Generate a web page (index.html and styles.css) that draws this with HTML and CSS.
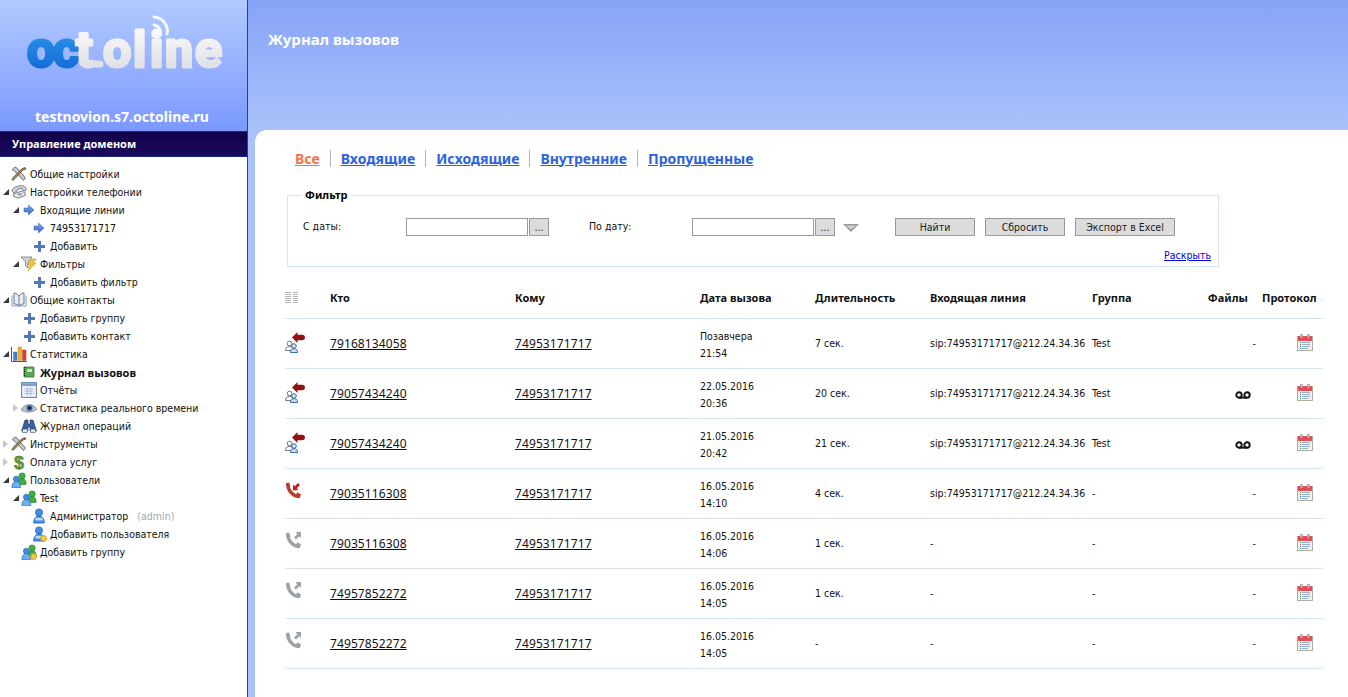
FILE: index.html
```html
<!DOCTYPE html>
<html lang="ru">
<head>
<meta charset="utf-8">
<title>Журнал вызовов</title>
<link rel="stylesheet" href="styles.css">
</head>
<body>
<svg class="defs" width="0" height="0">
  <defs>
    <linearGradient id="lg-blue" x1="0" y1="0" x2="0" y2="1"><stop offset="0" stop-color="#2f9df2"/><stop offset="1" stop-color="#0f62d2"/></linearGradient>
    <linearGradient id="lg-gray" x1="0" y1="0" x2="0" y2="1"><stop offset="0" stop-color="#ffffff"/><stop offset="1" stop-color="#d8d9dd"/></linearGradient>
    <linearGradient id="lg-arrow" x1="0" y1="0" x2="0" y2="1"><stop offset="0" stop-color="#86aef0"/><stop offset="1" stop-color="#2f62c4"/></linearGradient>
    <symbol id="i-tools" viewBox="0 0 16 16"><path d="M1 3.500L4 1l2 1 8.500 10-2 2.500L3.500 5z" fill="#c6cad0" stroke="#5a5a5a" stroke-width=".8"/><path d="M14 1.500l1 1.500-3 1-8 8.500-2 2-1-1 1.500-2.500L10.500 3z" fill="#a08a60" stroke="#57492f" stroke-width=".8"/></symbol>
    <symbol id="i-phone" viewBox="0 0 18 18"><path d="M1 8c0-3 5-6 10-6s6 2 6 4l-1 2-3-1-1-2-5 1v2l-4 2z" fill="#c9d2de" stroke="#5d6673" stroke-width=".9"/><path d="M3 11l9-3 4 2v3l-8 3-5-2z" fill="#e3e7ec" stroke="#5d6673" stroke-width=".9"/><ellipse cx="10" cy="11.500" rx="2.600" ry="1.500" fill="#95a1b1"/></symbol>
    <symbol id="i-arrow" viewBox="0 0 12 12"><path d="M1 4h4.500V1L11 6l-5.500 5V8H1z" fill="url(#lg-arrow)" stroke="#2f5fb0" stroke-width=".5"/></symbol>
    <symbol id="i-plus" viewBox="0 0 11 11"><path d="M4 0h3v4h4v3H7v4H4V7H0V4h4z" fill="#5379bd"/></symbol>
    <symbol id="i-filter" viewBox="0 0 16 16"><path d="M0 1h11L7 6v6L4.500 10V6z" fill="#d3d7dd" stroke="#666" stroke-width=".7"/><path d="M10 3h5l-3 4h3l-8 8 2.500-6H7z" fill="#f3c82f" stroke="#a98814" stroke-width=".5"/></symbol>
    <symbol id="i-book" viewBox="0 0 16 16"><path d="M8 4C6.500 2 4.500 1 3 1v11c2 0 4 .5 5 2.500 1-2 3-2.500 5-2.500V1c-1.500 0-3.500 1-5 3z" fill="#e6edf7" stroke="#51638a" stroke-width=".9"/><path d="M8 4v10" stroke="#51638a" stroke-width=".8"/><path d="M1 3.500V14h6M15 3.500V14H9" fill="none" stroke="#7d8eb0" stroke-width=".9"/></symbol>
    <symbol id="i-chart" viewBox="0 0 16 16"><path d="M.5 1v14.500H16" fill="none" stroke="#556" stroke-width="1"/><rect x="2.500" y="6" width="3.500" height="8.500" fill="#4a7fd8" stroke="#2f5fb0" stroke-width=".4"/><rect x="7" y="1" width="3.500" height="13.500" fill="#eeb02a" stroke="#b37d10" stroke-width=".4"/><rect x="11.500" y="4" width="3.500" height="10.500" fill="#d8412e" stroke="#a02a1a" stroke-width=".4"/></symbol>
    <symbol id="i-journal" viewBox="0 0 12 12"><rect x="1" y="1" width="10" height="10" rx=".5" fill="#5da35a" stroke="#3c6d3b" stroke-width=".8"/><rect x="4" y="3" width="5" height="3" fill="#cfe6c9"/><path d="M1.500 1v10" stroke="#222" stroke-width="1.200" stroke-dasharray="1 1"/></symbol>
    <symbol id="i-report" viewBox="0 0 14 14"><rect x=".5" y=".5" width="13" height="13" fill="#eef3fb" stroke="#6d8dbd"/><rect x="1" y="1" width="12" height="2.500" fill="#7f9fd2"/><path d="M3 6h8M3 8h8M3 10h8M5.500 5v7M8.500 5v7" stroke="#9fb2cf" stroke-width=".7"/></symbol>
    <symbol id="i-eye" viewBox="0 0 16 10"><path d="M0 7c3-6 11-8 16-1-4 4-12 4-16 1z" fill="#b9c1cf" stroke="#667" stroke-width=".6"/><circle cx="8.500" cy="5" r="3" fill="#3e5fa8"/><circle cx="8.500" cy="5" r="1.300" fill="#112"/></symbol>
    <symbol id="i-binoc" viewBox="0 0 16 16"><path d="M4 2h3v4h2V2h3l3.500 11H9V9H7v4H.5z" fill="#3d5f9e" stroke="#23375f" stroke-width=".6"/><rect x="1.500" y="11" width="5" height="3.500" fill="#dbe4f2" stroke="#23375f" stroke-width=".5"/><rect x="9.500" y="11" width="5" height="3.500" fill="#dbe4f2" stroke="#23375f" stroke-width=".5"/></symbol>
    <symbol id="i-dollar" viewBox="0 0 16 16"><text x="8" y="14.500" text-anchor="middle" font-family="Liberation Sans" font-weight="700" font-size="18" fill="#5f9a3d" stroke="#3c6b26" stroke-width=".4">$</text></symbol>
    <symbol id="i-user-b" viewBox="0 0 16 18"><circle cx="8" cy="5" r="4" fill="#3d8fe8" stroke="#1f5cb0" stroke-width=".8"/><path d="M2 17c0-6 3-8 6-8s6 2 6 8z" fill="#3d8fe8" stroke="#1f5cb0" stroke-width=".8"/><rect x="4" y="11" width="8" height="3" fill="#bcdcff"/></symbol>
    <symbol id="i-users" viewBox="0 0 18 18"><circle cx="12.500" cy="4.500" r="3.500" fill="#3fb13a" stroke="#257a22" stroke-width=".7"/><path d="M8 14c0-5 1.500-6.500 4.500-6.500S17 9 17 14z" fill="#3fb13a" stroke="#257a22" stroke-width=".7"/><circle cx="6" cy="8" r="3.300" fill="#3d8fe8" stroke="#1f5cb0" stroke-width=".7"/><path d="M1 17.500c0-5 2-6.500 5-6.500s5 1.500 5 6.500z" fill="#6cb0f2" stroke="#1f5cb0" stroke-width=".7"/></symbol>
    <symbol id="i-badge" viewBox="0 0 7 7"><circle cx="3.500" cy="3.500" r="3" fill="#f6c93c" stroke="#b68b12" stroke-width=".7"/></symbol>
    <symbol id="i-cols" viewBox="0 0 13 11"><path d="M0 .5h6M0 2.500h6M0 4.500h6M0 6.500h6M0 8.500h6M0 10.500h6M8 .5h5M8 2.500h5M8 4.500h5M8 6.500h5M8 8.500h5M8 10.500h5" stroke="#b5b5b5" stroke-width="1"/></symbol>
    <symbol id="i-in-user" viewBox="0 0 20 21"><path d="M7 5.500L12.500 0v2.800H17c2 0 3 1.200 3 2.700S19 8.200 17 8.200h-4.500V11z" fill="#96100f"/><circle cx="4.500" cy="11.500" r="2.300" fill="#fff" stroke="#666" stroke-width=".9"/><path d="M.5 18.500c0-3 1.500-4 4-4s3.500 1 3.500 4z" fill="#fff" stroke="#666" stroke-width=".9"/><circle cx="9" cy="14" r="2.300" fill="#d8e6f6" stroke="#2c5c9c" stroke-width=".9"/><path d="M5.500 20.500c0-2.800 1-3.800 3.500-3.800s3.500 1 3.500 3.800z" fill="#cfe0f4" stroke="#2c5c9c" stroke-width=".9"/></symbol>
    <symbol id="i-missed" viewBox="0 0 16 17"><path d="M2.800 2.500C2.800 8.500 8 14.300 13.500 14.500" fill="none" stroke="#b8402a" stroke-width="3.400" stroke-linecap="round"/><path d="M.8 1.500L4 .5l1.500 4.200-2.800 1.300zM10.800 13.200l1.500-3 3.700 2.300-1.300 3.500z" fill="#b8402a"/><path d="M8 8.500V2.500l1.800 1.800L13 1l2 2-3.300 3.200L13.500 8z" fill="#c81c1c"/></symbol>
    <symbol id="i-out" viewBox="0 0 16 17"><path d="M2.800 2.500C2.800 8.500 8 14.300 13.500 14.500" fill="none" stroke="#9da2a6" stroke-width="3.400" stroke-linecap="round"/><path d="M.8 1.500L4 .5l1.500 4.200-2.800 1.300zM10.800 13.200l1.500-3 3.700 2.300-1.300 3.500z" fill="#9da2a6"/><path d="M16 0v6l-1.800-1.800L11 7.500l-2-2 3.300-3.200L10.500 0z" fill="#9da2a6"/></symbol>
    <symbol id="i-vm" viewBox="0 0 16 8"><circle cx="4" cy="4" r="2.700" fill="none" stroke="#111" stroke-width="1.900"/><circle cx="12" cy="4" r="2.700" fill="none" stroke="#111" stroke-width="1.900"/><path d="M4 6.700h8" stroke="#111" stroke-width="1.900"/></symbol>
    <symbol id="i-cal" viewBox="0 0 16 17"><rect x=".5" y="2.500" width="15" height="14" fill="#f4f1ea" stroke="#a8a397" stroke-width=".9"/><rect x="1" y="2" width="14" height="5" fill="#ea4a54"/><rect x="3.500" y="0" width="2" height="4" fill="#c3c6cb" stroke="#77797d" stroke-width=".4"/><rect x="10.500" y="0" width="2" height="4" fill="#c3c6cb" stroke="#77797d" stroke-width=".4"/><path d="M3 8.500h1" stroke="#2f9a3a"/><path d="M3 10.500h1" stroke="#d84a3a"/><path d="M3 12.500h1" stroke="#3468c0"/><path d="M3 14.500h1" stroke="#2f9a3a"/><path d="M5 8.500h8M5 10.500h8M5 12.500h8M5 14.500h6" stroke="#97b2c4"/></symbol>
  </defs>
</svg>

<div class="page">
  <aside class="sidebar">
    <div class="brand">
      <svg class="logo" viewBox="0 0 208 62" width="208" height="62" role="img" aria-label="octoline">
        <path d="M66 48h14" class="logo-foot"/>
        <text class="logo-t" x="7 33 56 83 113 130 145 175" y="51"><tspan class="logo-oc">oc</tspan><tspan class="logo-rest">toline</tspan></text>
        <path d="M134 9a7 7 0 0 1 6 9" class="logo-arc"/><path d="M134 1a14 14 0 0 1 13 17" class="logo-arc"/>
      </svg>
      <div class="domain">testnovion.s7.octoline.ru</div>
    </div>
    <div class="section-title">Управление доменом</div>
    <ul class="tree">
      <li class="node l0"><span class="tog"></span><svg class="ic ic16"><use href="#i-tools"/></svg><span>Общие настройки</span></li>
      <li class="node l0"><span class="tog open"></span><svg class="ic ic16"><use href="#i-phone"/></svg><span>Настройки телефонии</span></li>
      <li class="node l1"><span class="tog open"></span><svg class="ic ic16"><use href="#i-arrow" width="12" height="12" x="2" y="2"/></svg><span>Входящие линии</span></li>
      <li class="node l2"><svg class="ic ic16"><use href="#i-arrow" width="12" height="12" x="2" y="2"/></svg><span>74953171717</span></li>
      <li class="node l2"><svg class="ic ic16"><use href="#i-plus" width="11" height="11" x="3" y="3"/></svg><span>Добавить</span></li>
      <li class="node l1"><span class="tog open"></span><svg class="ic ic16"><use href="#i-filter"/></svg><span>Фильтры</span></li>
      <li class="node l2"><svg class="ic ic16"><use href="#i-plus" width="11" height="11" x="3" y="3"/></svg><span>Добавить фильтр</span></li>
      <li class="node l0"><span class="tog open"></span><svg class="ic ic16"><use href="#i-book"/></svg><span>Общие контакты</span></li>
      <li class="node l1"><span class="tog"></span><svg class="ic ic16"><use href="#i-plus" width="11" height="11" x="3" y="3"/></svg><span>Добавить группу</span></li>
      <li class="node l1"><span class="tog"></span><svg class="ic ic16"><use href="#i-plus" width="11" height="11" x="3" y="3"/></svg><span>Добавить контакт</span></li>
      <li class="node l0"><span class="tog open"></span><svg class="ic ic16"><use href="#i-chart"/></svg><span>Статистика</span></li>
      <li class="node l1 current"><span class="tog"></span><svg class="ic ic16"><use href="#i-journal" width="12" height="12" x="2" y="2"/></svg><span>Журнал вызовов</span></li>
      <li class="node l1"><span class="tog"></span><svg class="ic ic16"><use href="#i-report"/></svg><span>Отчёты</span></li>
      <li class="node l1"><span class="tog closed"></span><svg class="ic ic16"><use href="#i-eye"/></svg><span>Статистика реального времени</span></li>
      <li class="node l1"><span class="tog"></span><svg class="ic ic16"><use href="#i-binoc"/></svg><span>Журнал операций</span></li>
      <li class="node l0"><span class="tog closed"></span><svg class="ic ic16"><use href="#i-tools"/></svg><span>Инструменты</span></li>
      <li class="node l0"><span class="tog closed"></span><svg class="ic ic16"><use href="#i-dollar"/></svg><span>Оплата услуг</span></li>
      <li class="node l0"><span class="tog open"></span><svg class="ic ic16"><use href="#i-users"/></svg><span>Пользователи</span></li>
      <li class="node l1"><span class="tog open"></span><svg class="ic ic16"><use href="#i-users"/></svg><span>Test</span></li>
      <li class="node l2"><svg class="ic ic16"><use href="#i-user-b"/></svg><span>Администратор</span><span class="muted">(admin)</span></li>
      <li class="node l2"><svg class="ic ic16"><use href="#i-user-b"/><use href="#i-badge" width="7" height="7" x="9" y="9"/></svg><span>Добавить пользователя</span></li>
      <li class="node l1"><span class="tog"></span><svg class="ic ic16"><use href="#i-users"/><use href="#i-badge" width="7" height="7" x="9" y="9"/></svg><span>Добавить группу</span></li>
    </ul>
  </aside>

  <div class="main">
    <header class="topbar"><h1>Журнал вызовов</h1></header>
    <section class="content">
      <nav class="tabs">
        <a class="tab active" href="#">Все</a>
        <a class="tab" href="#">Входящие</a>
        <a class="tab" href="#">Исходящие</a>
        <a class="tab" href="#">Внутренние</a>
        <a class="tab" href="#">Пропущенные</a>
      </nav>

      <fieldset class="filter">
        <legend>Фильтр</legend>
        <div class="filter-row">
          <label class="lbl lbl-from">С даты:</label>
          <input class="date" type="text"><button class="pick" type="button">...</button>
          <label class="lbl lbl-to">По дату:</label>
          <input class="date" type="text"><button class="pick" type="button">...</button>
          <svg class="more" viewBox="0 0 16 9" width="16" height="9"><path d="M0 0h16L8 8z" fill="#9a9a9a"/><path d="M3 1.500h10L8 5.500z" fill="#d4d4d4"/></svg>
          <button class="btn btn-find" type="button">Найти</button>
          <button class="btn" type="button">Сбросить</button>
          <button class="btn btn-wide" type="button">Экспорт в Excel</button>
        </div>
        <div class="expand"><a href="#">Раскрыть</a></div>
      </fieldset>

      <table class="calls">
        <colgroup>
          <col class="c-ic"><col class="c-who"><col class="c-to"><col class="c-date"><col class="c-dur"><col class="c-line"><col class="c-grp"><col class="c-files"><col class="c-prot">
        </colgroup>
        <thead>
          <tr>
            <th class="cell-ic"><svg class="cols" width="13" height="11"><use href="#i-cols"/></svg></th>
            <th>Кто</th><th>Кому</th><th>Дата вызова</th><th>Длительность</th><th>Входящая линия</th><th>Группа</th><th class="th-files">Файлы</th><th>Протокол</th>
          </tr>
        </thead>
        <tbody>
          <tr>
            <td class="cell-ic"><svg class="call-in" width="20" height="21"><use href="#i-in-user"/></svg></td>
            <td><a class="num" href="#">79168134058</a></td><td><a class="num" href="#">74953171717</a></td>
            <td class="td-date">Позавчера<br>21:54</td><td>7 сек.</td><td>sip:74953171717@212.24.34.36</td><td>Test</td>
            <td class="td-files">-</td><td class="td-prot"><svg class="cal" width="16" height="17"><use href="#i-cal"/></svg></td>
          </tr>
          <tr>
            <td class="cell-ic"><svg class="call-in" width="20" height="21"><use href="#i-in-user"/></svg></td>
            <td><a class="num" href="#">79057434240</a></td><td><a class="num" href="#">74953171717</a></td>
            <td class="td-date">22.05.2016<br>20:36</td><td>20 сек.</td><td>sip:74953171717@212.24.34.36</td><td>Test</td>
            <td class="td-files"><svg class="vm" width="16" height="8"><use href="#i-vm"/></svg></td><td class="td-prot"><svg class="cal" width="16" height="17"><use href="#i-cal"/></svg></td>
          </tr>
          <tr>
            <td class="cell-ic"><svg class="call-in" width="20" height="21"><use href="#i-in-user"/></svg></td>
            <td><a class="num" href="#">79057434240</a></td><td><a class="num" href="#">74953171717</a></td>
            <td class="td-date">21.05.2016<br>20:42</td><td>21 сек.</td><td>sip:74953171717@212.24.34.36</td><td>Test</td>
            <td class="td-files"><svg class="vm" width="16" height="8"><use href="#i-vm"/></svg></td><td class="td-prot"><svg class="cal" width="16" height="17"><use href="#i-cal"/></svg></td>
          </tr>
          <tr>
            <td class="cell-ic"><svg class="call" width="16" height="17"><use href="#i-missed"/></svg></td>
            <td><a class="num" href="#">79035116308</a></td><td><a class="num" href="#">74953171717</a></td>
            <td class="td-date">16.05.2016<br>14:10</td><td>4 сек.</td><td>sip:74953171717@212.24.34.36</td><td>-</td>
            <td class="td-files">-</td><td class="td-prot"><svg class="cal" width="16" height="17"><use href="#i-cal"/></svg></td>
          </tr>
          <tr>
            <td class="cell-ic"><svg class="call" width="16" height="17"><use href="#i-out"/></svg></td>
            <td><a class="num" href="#">79035116308</a></td><td><a class="num" href="#">74953171717</a></td>
            <td class="td-date">16.05.2016<br>14:06</td><td>1 сек.</td><td>-</td><td>-</td>
            <td class="td-files">-</td><td class="td-prot"><svg class="cal" width="16" height="17"><use href="#i-cal"/></svg></td>
          </tr>
          <tr>
            <td class="cell-ic"><svg class="call" width="16" height="17"><use href="#i-out"/></svg></td>
            <td><a class="num" href="#">74957852272</a></td><td><a class="num" href="#">74953171717</a></td>
            <td class="td-date">16.05.2016<br>14:05</td><td>1 сек.</td><td>-</td><td>-</td>
            <td class="td-files">-</td><td class="td-prot"><svg class="cal" width="16" height="17"><use href="#i-cal"/></svg></td>
          </tr>
          <tr>
            <td class="cell-ic"><svg class="call" width="16" height="17"><use href="#i-out"/></svg></td>
            <td><a class="num" href="#">74957852272</a></td><td><a class="num" href="#">74953171717</a></td>
            <td class="td-date">16.05.2016<br>14:05</td><td>-</td><td>-</td><td>-</td>
            <td class="td-files">-</td><td class="td-prot"><svg class="cal" width="16" height="17"><use href="#i-cal"/></svg></td>
          </tr>
        </tbody>
      </table>
    </section>
  </div>
</div>
</body>
</html>
```

FILE: styles.css
```css
* { box-sizing: border-box; }
html, body { margin: 0; height: 100%; overflow: hidden; }
body { font-family: "DejaVu Sans Condensed", "Noto Sans", sans-serif; font-size: 10.5px; color: #111; background: #fff; }
.defs { position: absolute; }
.page { display: flex; height: 697px; }

.sidebar { width: 248px; flex: none; border-right: 1px solid #2a3f8f; background: #fff; }
.brand { height: 131px; background: linear-gradient(#b2caff, #7b98fe); display: flex; flex-direction: column; }
.logo { margin: 16px 0 0 20px; overflow: visible; }
.logo-t { font-family: "Roboto", sans-serif; font-weight: 700; font-size: 50px; stroke-linejoin: round; stroke-width: 3px; }
.logo-oc { fill: url(#lg-blue); stroke: url(#lg-blue); }
.logo-rest { fill: url(#lg-gray); stroke: url(#lg-gray); }
.logo-foot { fill: none; stroke: #dfe0e4; stroke-width: 7; stroke-linecap: round; }
.logo-arc { fill: none; stroke: #f6f7fb; stroke-width: 3; stroke-linecap: round; }
.domain { margin-top: 29px; text-align: center; font-family: "Noto Sans", sans-serif; font-size: 14px; line-height: 19px; font-weight: 700; color: #fff; margin-left: -3px; }
.section-title { height: 26px; line-height: 24px; padding-left: 12px; font-family: "Noto Sans", sans-serif; font-size: 11px; font-weight: 700; color: #fff; background: linear-gradient(#12004a, #1a0a5a); border-top: 1px solid #1b2a8c; border-bottom: 1px solid #1b2a8c; }

.tree { list-style: none; margin: 8px 0 0; padding: 0; }
.node { display: flex; align-items: center; height: 18px; white-space: nowrap; }
.l0 { padding-left: 3px; }
.l1 { padding-left: 13px; }
.l2 { padding-left: 31px; }
.tog { width: 6px; height: 6px; flex: none; margin-right: 2px; position: relative; }
.tog.open::before { content: ""; position: absolute; right: 0; bottom: 0; border-style: solid; border-width: 0 0 6px 6px; border-color: transparent transparent #3a3a3a transparent; }
.tog.closed::before { content: ""; position: absolute; left: 0; top: -1px; border-style: solid; border-width: 4px 0 4px 5px; border-color: transparent transparent transparent #c8c8c8; }
.ic { flex: none; margin-right: 3px; }
.ic16 { width: 16px; height: 16px; }
.current { font-family: "Noto Sans", sans-serif; font-size: 11px; font-weight: 700; }
.muted { margin-left: 9px; color: #a8a8a8; }

.main { flex: 1; min-width: 0; display: flex; flex-direction: column; background: #a9c2fb; }
.topbar { height: 130px; background: linear-gradient(#87a3f8, #a9c2fb); padding: 30px 0 0 20px; }
.topbar h1 { margin: 0; font-family: "Noto Sans", sans-serif; font-size: 15px; line-height: 19px; font-weight: 700; color: #fff; }
.content { flex: 1; margin-left: 7px; background: #fff; border-top-left-radius: 12px; padding: 17px 25px 0 30px; }

.tabs { display: flex; align-items: center; height: 22px; padding-left: 10px; }
.tab { font-family: "Noto Sans", sans-serif; font-size: 14px; font-weight: 700; color: #2a62e0; padding: 0 10px; border-left: 1px solid #b0b0b0; line-height: 17px; }
.tab:first-child { border-left: 0; padding-left: 0; }
.tab:nth-child(2) { letter-spacing: .1px; }
.tab.active { color: #f4734a; }

.filter { margin: 19px 0 0 2px; width: 932px; height: 79px; padding: 0 7px 0 15px; border: 1px solid #d3e4f5; }
.filter legend { margin-left: -1px; padding: 0 3px; font-family: "Noto Sans", sans-serif; font-size: 11px; font-weight: 700; line-height: 14px; color: #000; }
.filter-row { display: flex; align-items: center; height: 18px; margin-top: 16px; }
.lbl { color: #111; position: relative; top: -1px; }
.lbl-from { width: 103px; }
.lbl-to { width: 103px; margin-left: 40px; }
.date { width: 122px; height: 18px; padding: 0 2px; border: 1px solid #999; background: #fff; }
.pick { width: 20px; height: 18px; margin-left: 1px; padding: 0; border: 1px solid #999; background: #dcdcdc; font: inherit; color: #111; }
.more { margin-left: 8px; margin-top: 3px; }
.btn { width: 80px; height: 18px; margin-left: 10px; padding: 0; border: 1px solid #999; background: #dcdcdc; font: inherit; color: #222; }
.btn-find { margin-left: 36px; }
.btn-wide { width: 100px; }
.expand { text-align: right; margin-top: 13px; }
.expand a { color: #0000ee; text-decoration: underline; }

.calls { table-layout: fixed; border-collapse: collapse; width: 1038px; margin-top: 15px; }
.c-ic { width: 45px; } .c-who { width: 185px; } .c-to { width: 185px; } .c-date { width: 115px; } .c-dur { width: 115px; }
.c-line { width: 162px; } .c-grp { width: 115px; } .c-files { width: 55px; } .c-prot { width: 61px; }
.calls th { height: 36px; padding: 0 0 4px; text-align: left; font-family: "Noto Sans", sans-serif; font-size: 11px; font-weight: 700; color: #111; border-bottom: 1px solid #d3e4f5; }
.calls td { height: 50px; padding: 1px 0 0; border-bottom: 1px solid #d3e4f5; line-height: 17px; white-space: nowrap; }
.cell-ic svg { display: block; }
.calls .td-date { padding-top: 3px; }
.num { font-family: "Noto Sans", sans-serif; font-size: 12px; letter-spacing: .1px; color: #111; text-decoration: underline; }
.calls .th-files { padding-right: 14px; text-align: right; }
.calls .td-files { text-align: right; padding-right: 6px; }
.calls .td-prot { text-align: right; padding-right: 10px; }
.vm { vertical-align: middle; margin: 1px 5px 0 0; }
.cal { display: block; margin: -3px 0 0 auto; }
.call { display: block; margin-top: -6px; }
.call-in { margin-top: -3px; }
```
